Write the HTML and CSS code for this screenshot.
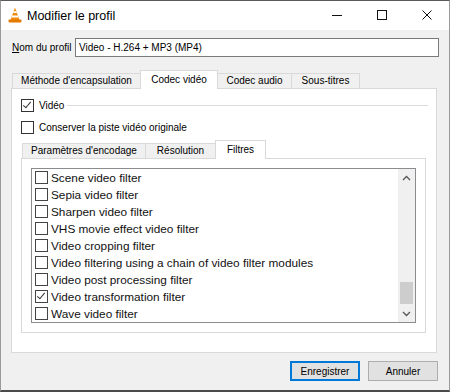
FILE: index.html
```html
<!DOCTYPE html>
<html lang="fr">
<head>
    <meta charset="UTF-8">
    <title>Modifier le profil</title>
    <link rel="stylesheet" href="styles.css">
</head>
<body>
    <div class="window">
        <div class="titlebar">
            <svg class="app-icon" width="16" height="16" viewBox="0 0 16 16">
                <polygon points="8,0.5 12.6,13.2 3.4,13.2" fill="#f28c0f"/>
                <polygon points="6.7,4.2 9.3,4.2 10,6.1 6,6.1" fill="#ffffff"/>
                <polygon points="5.1,8.6 10.9,8.6 11.6,10.5 4.4,10.5" fill="#ffffff"/>
                <rect x="1.5" y="12.6" width="13" height="3" rx="1" fill="#e57a00"/>
            </svg>
            <span class="title">Modifier le profil</span>
            <div class="controls">
                <span class="ctl">
                    <svg width="10" height="10" viewBox="0 0 10 10"><path d="M0 5.5 H10" stroke="#111" stroke-width="1"/></svg>
                </span>
                <span class="ctl">
                    <svg width="10" height="10" viewBox="0 0 10 10"><rect x="0.5" y="0.5" width="9" height="9" fill="none" stroke="#111" stroke-width="1"/></svg>
                </span>
                <span class="ctl">
                    <svg width="10" height="10" viewBox="0 0 10 10"><path d="M0.5 0.5 L9.5 9.5 M9.5 0.5 L0.5 9.5" stroke="#111" stroke-width="1"/></svg>
                </span>
            </div>
        </div>

        <div class="content">
            <div class="name-row">
                <label class="name-label"><u>N</u>om du profil</label>
                <input class="name-input" type="text" value="Video - H.264 + MP3 (MP4)">
            </div>

            <div class="tabs outer-tabs">
                <div class="tab" style="width: 129px">Méthode d'encapsulation</div>
                <div class="tab active" style="width: 78px">Codec vidéo</div>
                <div class="tab" style="width: 75px">Codec audio</div>
                <div class="tab" style="width: 69px">Sous-titres</div>
            </div>

            <div class="panel">
                <div class="group-row">
                    <span class="check checked"></span>
                    <span class="group-label">Vidéo</span>
                    <span class="rule"></span>
                </div>
                <div class="check-row">
                    <span class="check"></span>
                    <span class="check-label">Conserver la piste vidéo originale</span>
                </div>

                <div class="tabs inner-tabs">
                    <div class="tab" style="width: 124px">Paramètres d'encodage</div>
                    <div class="tab" style="width: 71px">Résolution</div>
                    <div class="tab active" style="width: 51px">Filtres</div>
                </div>

                <div class="inner-panel">
                    <div class="listbox">
                        <div class="items">
                            <div class="item"><span class="check"></span>Scene video filter</div>
                            <div class="item"><span class="check"></span>Sepia video filter</div>
                            <div class="item"><span class="check"></span>Sharpen video filter</div>
                            <div class="item"><span class="check"></span>VHS movie effect video filter</div>
                            <div class="item"><span class="check"></span>Video cropping filter</div>
                            <div class="item"><span class="check"></span>Video filtering using a chain of video filter modules</div>
                            <div class="item"><span class="check"></span>Video post processing filter</div>
                            <div class="item"><span class="check checked"></span>Video transformation filter</div>
                            <div class="item"><span class="check"></span>Wave video filter</div>
                        </div>
                        <div class="scrollbar">
                            <div class="arrow">
                                <svg width="9" height="6" viewBox="0 0 9 6"><path d="M1 5 L4.5 1.5 L8 5" fill="none" stroke="#555" stroke-width="1.3"/></svg>
                            </div>
                            <div class="track"><div class="thumb"></div></div>
                            <div class="arrow">
                                <svg width="9" height="6" viewBox="0 0 9 6"><path d="M1 1 L4.5 4.5 L8 1" fill="none" stroke="#555" stroke-width="1.3"/></svg>
                            </div>
                        </div>
                    </div>
                </div>
            </div>

            <div class="buttons">
                <button class="btn default">Enregistrer</button>
                <button class="btn">Annuler</button>
            </div>
        </div>
    </div>
</body>
</html>
```

FILE: styles.css
```css
body {
    margin: 0;
    padding: 0;
    font-family: "Liberation Sans", Arial, sans-serif;
    font-size: 10px;
    color: #000;
    background-color: #f0f0f0;
}
.window {
    width: 450px;
    height: 392px;
    box-sizing: border-box;
    background-color: #f0f0f0;
    border-top: 1px solid #5a5a5a;
    border-left: 1px solid #9a9a9a;
    border-right: 1px solid #9a9a9a;
    border-bottom: 2px solid #4a4a4a;
    overflow: hidden;
}
.titlebar {
    height: 29px;
    background-color: #fff;
    display: flex;
    align-items: center;
}
.app-icon {
    margin-left: 6px;
    margin-top: -1px;
}
.title {
    margin-left: 4px;
    font-size: 12.5px;
    color: #000;
}
.controls {
    margin-left: auto;
    display: flex;
    height: 100%;
}
.ctl {
    width: 45px;
    display: flex;
    align-items: center;
    justify-content: center;
    margin-top: -1px;
}
.content {
    padding: 0 10px 0 10px;
}
.name-row {
    display: flex;
    align-items: center;
    margin-top: 8px;
    height: 19px;
}
.name-label {
    width: 64px;
    padding-left: 1px;
    box-sizing: border-box;
    white-space: nowrap;
}
.name-input {
    flex: 1;
    height: 19px;
    box-sizing: border-box;
    border: 1px solid #7a7a7a;
    padding: 0 3px;
    font-family: inherit;
    font-size: 10px;
    margin: 0;
    outline: none;
}
.tabs {
    display: flex;
    align-items: flex-end;
    height: 18px;
}
.outer-tabs {
    margin-top: 13px;
    margin-left: 1px;
}
.tab {
    height: 15px;
    line-height: 14px;
    box-sizing: border-box;
    border: 1px solid #d9d9d9;
    border-bottom: none;
    margin-right: -1px;
    background-color: #f0f0f0;
    text-align: center;
    white-space: nowrap;
}
.tab.active {
    height: 19px;
    line-height: 17px;
    margin-bottom: -1px;
    background-color: #fff;
    position: relative;
    z-index: 1;
}
.panel {
    background-color: #fff;
    border: 1px solid #d9d9d9;
    margin-right: 2px;
    padding: 10px 10px 19px 9px;
}
.group-row,
.check-row {
    display: flex;
    align-items: center;
    height: 13px;
}
.check-row {
    margin-top: 9px;
}
.group-label,
.check-label {
    margin-left: 5px;
}
.rule {
    flex: 1;
    height: 1px;
    background-color: #dcdcdc;
    margin-left: 3px;
    margin-right: -2px;
}
.check {
    width: 13px;
    height: 13px;
    box-sizing: border-box;
    border: 1px solid #333;
    background-color: #fff;
    flex-shrink: 0;
    position: relative;
}
.check.checked::after {
    content: "";
    position: absolute;
    left: 3px;
    top: 0px;
    width: 3px;
    height: 7px;
    border-right: 1px solid #333;
    border-bottom: 1px solid #333;
    transform: rotate(40deg);
}
.inner-tabs {
    margin-top: 6px;
    margin-left: 1px;
}
.inner-panel {
    border: 1px solid #d9d9d9;
    padding: 9px;
    background-color: #fff;
}
.listbox {
    height: 155px;
    box-sizing: border-box;
    border: 1px solid #8a8c8f;
    display: flex;
}
.items {
    flex: 1;
    padding-left: 3px;
    font-size: 11.8px;
    overflow: hidden;
}
.item {
    height: 17px;
    display: flex;
    align-items: center;
    white-space: nowrap;
    color: #111;
}
.item .check {
    margin-right: 3px;
    border-color: #444;
}
.scrollbar {
    width: 17px;
    background-color: #f0f0f0;
    display: flex;
    flex-direction: column;
}
.arrow {
    height: 17px;
    display: flex;
    align-items: center;
    justify-content: center;
}
.track {
    flex: 1;
    display: flex;
    flex-direction: column;
    justify-content: flex-end;
    align-items: center;
    padding-bottom: 1px;
}
.thumb {
    width: 13px;
    height: 22px;
    background-color: #cdcdcd;
}
.buttons {
    display: flex;
    justify-content: flex-end;
    gap: 8px;
    margin-top: 8px;
    margin-right: 1px;
}
.btn {
    width: 70px;
    height: 20px;
    box-sizing: border-box;
    border: 1px solid #adadad;
    background-color: #e1e1e1;
    font-family: inherit;
    font-size: 10px;
    color: #000;
    padding: 0;
}
.btn.default {
    border: 2px solid #0078d7;
}
```
